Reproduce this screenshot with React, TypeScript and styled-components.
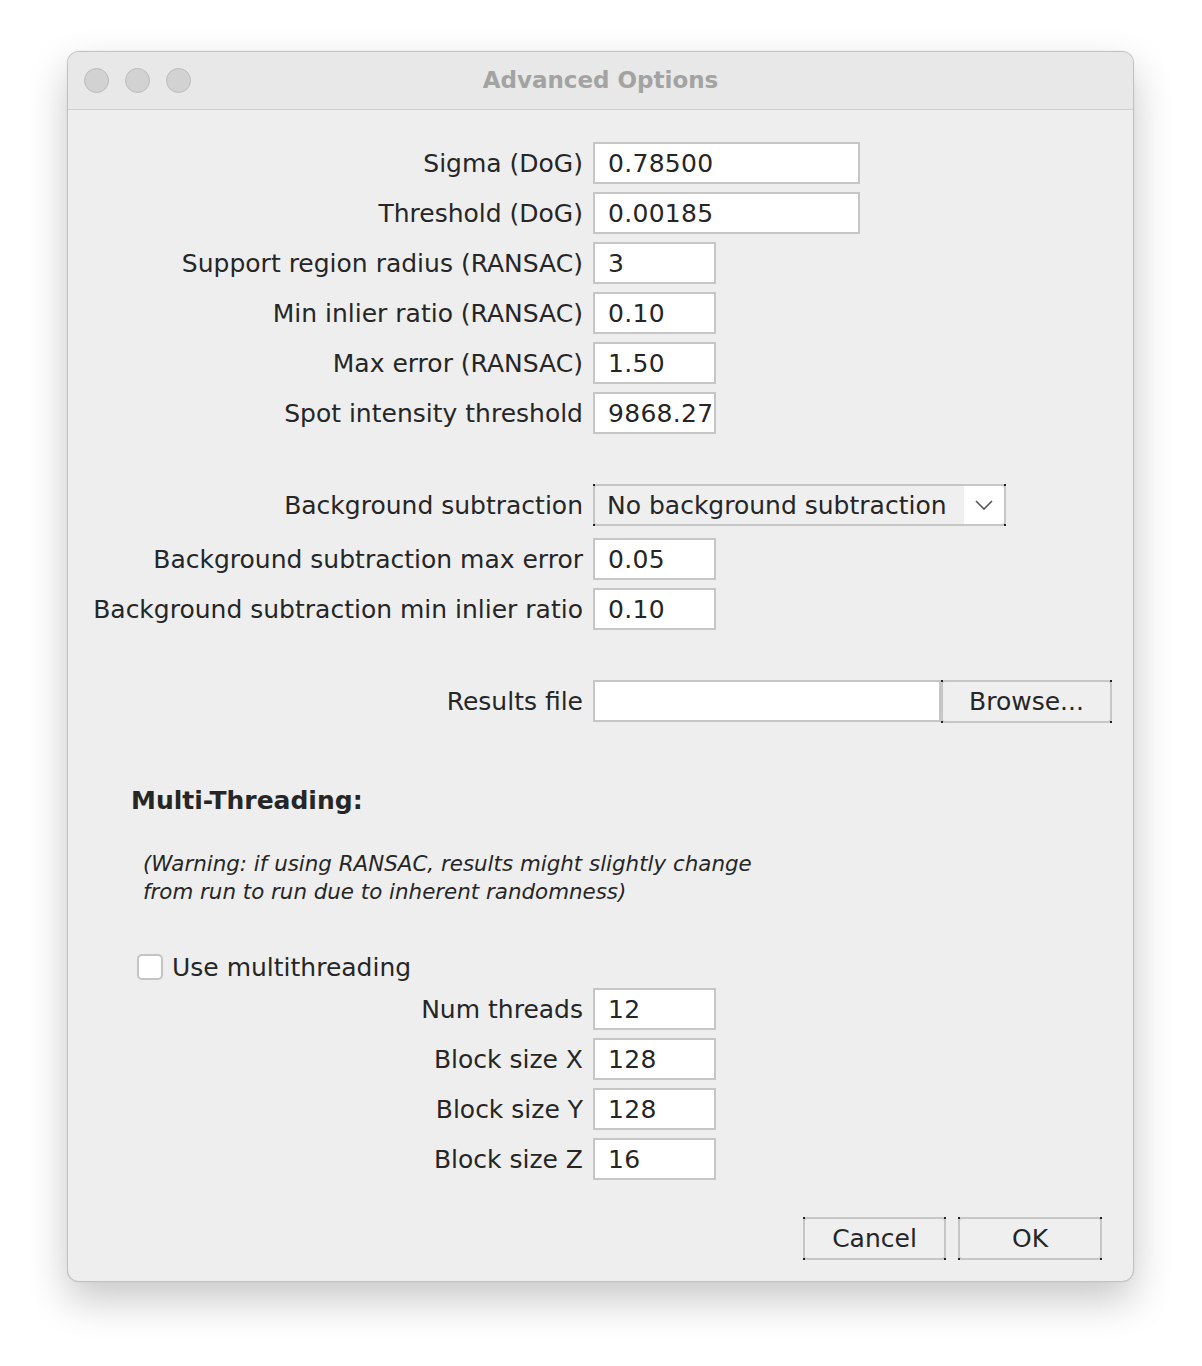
import styled, { createGlobalStyle } from 'styled-components'

const GlobalStyle = createGlobalStyle`
    html, body {
        margin: 0;
        padding: 0;
        background: #ffffff;
    }
    body {
        font-family: 'DejaVu Sans', 'Liberation Sans', sans-serif;
        color: #262626;
    }
`

const Page = styled.div`
    width: 1202px;
    height: 1366px;
    padding: 51px 0 0 67px;
    box-sizing: border-box;
`

const Window = styled.div`
    width: 1067px;
    height: 1231px;
    background: #eeeeee;
    border: 1px solid #c2c2c2;
    border-radius: 12px;
    box-sizing: border-box;
    box-shadow: 0 18px 40px rgba(0, 0, 0, 0.22), 0 0 1px rgba(0, 0, 0, 0.2);
    display: flex;
    flex-direction: column;
    overflow: hidden;
`

const TitleBar = styled.div`
    position: relative;
    height: 57px;
    flex: none;
    background: #e8e8e8;
    border-bottom: 1px solid #cfcfcf;
    display: flex;
    align-items: center;
    justify-content: center;
`

const Lights = styled.div`
    position: absolute;
    left: 16px;
    top: 16px;
    display: flex;
    gap: 16px;
`

const Light = styled.div`
    width: 23px;
    height: 23px;
    border-radius: 50%;
    background: #d2d2d2;
    border: 1px solid #bcbcbc;
`

const Title = styled.div`
    font-size: 23px;
    font-weight: bold;
    color: #a3a3a3;
    margin-top: -2px;
`

const Body = styled.div`
    padding: 32px 0 0 0;
    display: flex;
    flex-direction: column;
`

const Row = styled.div<{ $gap?: number }>`
    display: flex;
    align-items: center;
    height: 42px;
    margin-top: ${p => p.$gap ?? 8}px;
    &:first-child {
        margin-top: 0;
    }
`

const Label = styled.div`
    width: 525px;
    flex: none;
    text-align: right;
    font-size: 25px;
    white-space: nowrap;
    padding-right: 10px;
    box-sizing: border-box;
`

const Field = styled.div<{ $w: number }>`
    width: ${p => p.$w}px;
    height: 42px;
    box-sizing: border-box;
    background: #ffffff;
    border: 2px solid #c6c6c6;
    font-size: 25px;
    letter-spacing: 0.3px;
    padding: 0 0 0 13px;
    display: flex;
    align-items: center;
    overflow: hidden;
    white-space: nowrap;
`

const Combo = styled.div`
    width: 413px;
    height: 42px;
    box-sizing: border-box;
    border: 2px solid #c6c6c6;
    border-radius: 4px;
    display: flex;
    align-items: stretch;
    position: relative;
`

const ComboText = styled.div`
    flex: 1;
    font-size: 25px;
    padding-left: 12px;
    display: flex;
    align-items: center;
    background: #efefef;
    border-radius: 3px 0 0 3px;
    white-space: nowrap;
`

const ComboArrow = styled.div`
    width: 40px;
    background: #ffffff;
    border-radius: 0 3px 3px 0;
    display: flex;
    align-items: center;
    justify-content: center;
`

const Corner = styled.span<{ $pos: string }>`
    position: absolute;
    width: 2px;
    height: 2px;
    background: #222;
    ${p => p.$pos}
`

const Button = styled.div<{ $w: number }>`
    position: relative;
    width: ${p => p.$w}px;
    height: 43px;
    box-sizing: border-box;
    border: 2px solid #c6c6c6;
    border-radius: 4px;
    background: #efefef;
    font-size: 25px;
    display: flex;
    align-items: center;
    justify-content: center;
`

const Section = styled.div`
    font-size: 25px;
    font-weight: bold;
    margin: 65px 0 0 63px;
    line-height: 28px;
`

const Warning = styled.div`
    font-size: 21.4px;
    font-style: italic;
    margin: 35px 0 0 75px;
    line-height: 28px;
`

const CheckRow = styled.label`
    display: flex;
    align-items: center;
    margin: 47px 0 0 69px;
    font-size: 25px;
    gap: 9px;
    height: 28px;
`

const Box = styled.span`
    width: 26px;
    height: 26px;
    box-sizing: border-box;
    border: 2px solid #c4c4c4;
    border-radius: 5px;
    background: #ffffff;
`

const Footer = styled.div`
    display: flex;
    justify-content: flex-end;
    gap: 12px;
    margin: 37px 31px 0 0;
`

const corners = [
    'top: -2px; left: -2px;',
    'top: -2px; right: -2px;',
    'bottom: -2px; left: -2px;',
    'bottom: -2px; right: -2px;',
]

const Corners = () => (
    <>
        {corners.map(c => <Corner key={c} $pos={c} />)}
    </>
)

const Chevron = () => (
    <svg width="20" height="12" viewBox="0 0 20 12" fill="none">
        <path d="M2 2 L10 10 L18 2" stroke="#555" strokeWidth="1.6" />
    </svg>
)

const fields1 = [
    { label: 'Sigma (DoG)', value: '0.78500', w: 267 },
    { label: 'Threshold (DoG)', value: '0.00185', w: 267 },
    { label: 'Support region radius (RANSAC)', value: '3', w: 123 },
    { label: 'Min inlier ratio (RANSAC)', value: '0.10', w: 123 },
    { label: 'Max error (RANSAC)', value: '1.50', w: 123 },
    { label: 'Spot intensity threshold', value: '9868.27', w: 123 },
]

const threads = [
    { label: 'Num threads', value: '12' },
    { label: 'Block size X', value: '128' },
    { label: 'Block size Y', value: '128' },
    { label: 'Block size Z', value: '16' },
]

const App = () => {
    return (
        <Page>
            <GlobalStyle />
            <Window>
                <TitleBar>
                    <Lights><Light /><Light /><Light /></Lights>
                    <Title>Advanced Options</Title>
                </TitleBar>
                <Body>
                    {fields1.map(f => (
                        <Row key={f.label}>
                            <Label>{f.label}</Label>
                            <Field $w={f.w}>{f.value}</Field>
                        </Row>
                    ))}
                    <Row $gap={50}>
                        <Label>Background subtraction</Label>
                        <Combo>
                            <ComboText>No background subtraction</ComboText>
                            <ComboArrow><Chevron /></ComboArrow>
                            <Corners />
                        </Combo>
                    </Row>
                    <Row $gap={12}>
                        <Label>Background subtraction max error</Label>
                        <Field $w={123}>0.05</Field>
                    </Row>
                    <Row>
                        <Label>Background subtraction min inlier ratio</Label>
                        <Field $w={123}>0.10</Field>
                    </Row>
                    <Row $gap={50}>
                        <Label>Results file</Label>
                        <Field $w={348} />
                        <Button $w={171}>Browse...<Corners /></Button>
                    </Row>
                    <Section>Multi-Threading:</Section>
                    <Warning>
                        (Warning: if using RANSAC, results might slightly change<br />
                        from run to run due to inherent randomness)
                    </Warning>
                    <CheckRow><Box />Use multithreading</CheckRow>
                    {threads.map((t, i) => (
                        <Row key={t.label} $gap={i === 0 ? 7 : 8}>
                            <Label>{t.label}</Label>
                            <Field $w={123}>{t.value}</Field>
                        </Row>
                    ))}
                    <Footer>
                        <Button $w={143}>Cancel<Corners /></Button>
                        <Button $w={144}>OK<Corners /></Button>
                    </Footer>
                </Body>
            </Window>
        </Page>
    )
}

export default App
